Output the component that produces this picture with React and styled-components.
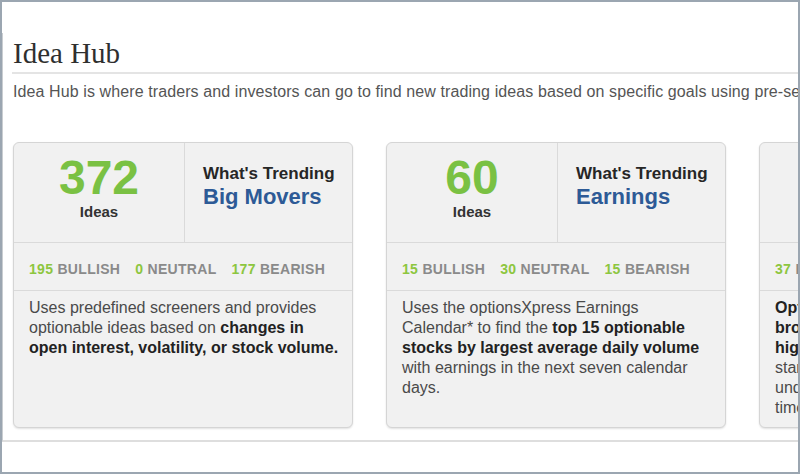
import styled, { createGlobalStyle } from "styled-components";

const GlobalStyle = createGlobalStyle`
    html, body {
        margin: 0;
        padding: 0;
        background: #ffffff;
    }
    * {
        box-sizing: border-box;
    }
`;

const hubs = [
    {
        count: 372,
        title: "Big Movers",
        bullish: 195,
        neutral: 0,
        bearish: 177,
        text: (
            <>
                Uses predefined screeners and provides optionable ideas based on{" "}
                <b>changes in open interest, volatility, or stock volume.</b>
            </>
        ),
    },
    {
        count: 60,
        title: "Earnings",
        bullish: 15,
        neutral: 30,
        bearish: 15,
        text: (
            <>
                Uses the optionsXpress Earnings Calendar* to find the{" "}
                <b>top 15 optionable stocks by largest average daily volume</b>{" "}
                with earnings in the next seven calendar days.
            </>
        ),
    },
    {
        count: 112,
        title: "Volatility",
        bullish: 37,
        neutral: 41,
        bearish: 34,
        text: (
            <>
                <b>Optionable stocks<br />broken out to new<br />highs or lows</b>
                <br />standard deviation
                <br />under the selected
                <br />timeframe.
            </>
        ),
    },
];

export default function App() {
    return (
        <>
            <GlobalStyle />
            <SFrame>
                <SPanel>
                    <STitle>Idea Hub</STitle>
                    <SIntro>
                        Idea Hub is where traders and investors can go to find new trading ideas based on specific goals using pre-set criteria.
                    </SIntro>
                    <SCards>
                        {hubs.map((hub) => (
                            <SCard key={hub.title}>
                                <STop>
                                    <SCount>
                                        <SNumber>{hub.count}</SNumber>
                                        <SIdeas>Ideas</SIdeas>
                                    </SCount>
                                    <STrend>
                                        <STrendLabel>What's Trending</STrendLabel>
                                        <STrendName>{hub.title}</STrendName>
                                    </STrend>
                                </STop>
                                <SStats>
                                    <SStat><SNum>{hub.bullish}</SNum> BULLISH</SStat>
                                    <SStat><SNum>{hub.neutral}</SNum> NEUTRAL</SStat>
                                    <SStat><SNum>{hub.bearish}</SNum> BEARISH</SStat>
                                </SStats>
                                <SText>{hub.text}</SText>
                            </SCard>
                        ))}
                    </SCards>
                </SPanel>
            </SFrame>
        </>
    );
}

const SFrame = styled.div`
    width: 100vw;
    height: 100vh;
    border: 2px solid #9ba6b1;
    overflow: hidden;
    padding-top: 31px;
    font-family: "Liberation Sans", Arial, sans-serif;
`;
const SPanel = styled.section`
    border-left: 1px solid #c9cdd1;
    border-bottom: 2px solid #dedede;
    padding: 3px 0 12px 10px;
`;
const STitle = styled.h1`
    margin: 0 0 0 -1px;
    padding: 0 0 1px 1px;
    font-family: "Liberation Serif", "Times New Roman", serif;
    font-weight: normal;
    font-size: 29px;
    line-height: 1.2;
    color: #2f2f2f;
    border-bottom: 2px solid #e4e4e4;
`;
const SIntro = styled.p`
    margin: 8px 0 0;
    font-size: 16px;
    line-height: 20px;
    letter-spacing: 0.1px;
    color: #555555;
    white-space: nowrap;
`;
const SCards = styled.div`
    display: flex;
    gap: 33px;
    margin-top: 40px;
`;
const SCard = styled.article`
    flex: 0 0 340px;
    height: 286px;
    background: #f1f1f1;
    border: 1px solid #d5d5d5;
    border-radius: 6px;
    box-shadow: 0 1px 2px rgba(0, 0, 0, 0.12);
    display: flex;
    flex-direction: column;
`;
const STop = styled.div`
    display: flex;
    height: 100px;
    border-bottom: 1px solid #dadada;
`;
const SCount = styled.div`
    flex: 0 0 171px;
    border-right: 1px solid #dadada;
    text-align: center;
    padding-top: 11px;
`;
const SNumber = styled.div`
    font-size: 48px;
    font-weight: bold;
    line-height: 48px;
    color: #7ac143;
`;
const SIdeas = styled.div`
    margin-top: 1px;
    font-size: 15px;
    font-weight: bold;
    line-height: 18px;
    color: #333333;
`;
const STrend = styled.div`
    flex: 1;
    padding: 20px 0 0 18px;
`;
const STrendLabel = styled.div`
    font-size: 17px;
    font-weight: bold;
    line-height: 21px;
    color: #262626;
`;
const STrendName = styled.div`
    font-size: 22px;
    font-weight: bold;
    line-height: 26px;
    color: #2d5a96;
`;
const SStats = styled.div`
    height: 48px;
    display: flex;
    gap: 15px;
    padding: 16px 0 0 15px;
    border-bottom: 1px solid #dadada;
    font-size: 14px;
    font-weight: bold;
    line-height: 20px;
    letter-spacing: 0.3px;
    color: #8a8a8a;
    white-space: nowrap;
`;
const SStat = styled.span``;
const SNum = styled.span`
    color: #8dc63f;
`;
const SText = styled.p`
    margin: 0;
    padding: 7px 0 0 15px;
    width: 326px;
    font-size: 16px;
    line-height: 20px;
    color: #4a4a4a;
    b {
        color: #222222;
    }
`;
